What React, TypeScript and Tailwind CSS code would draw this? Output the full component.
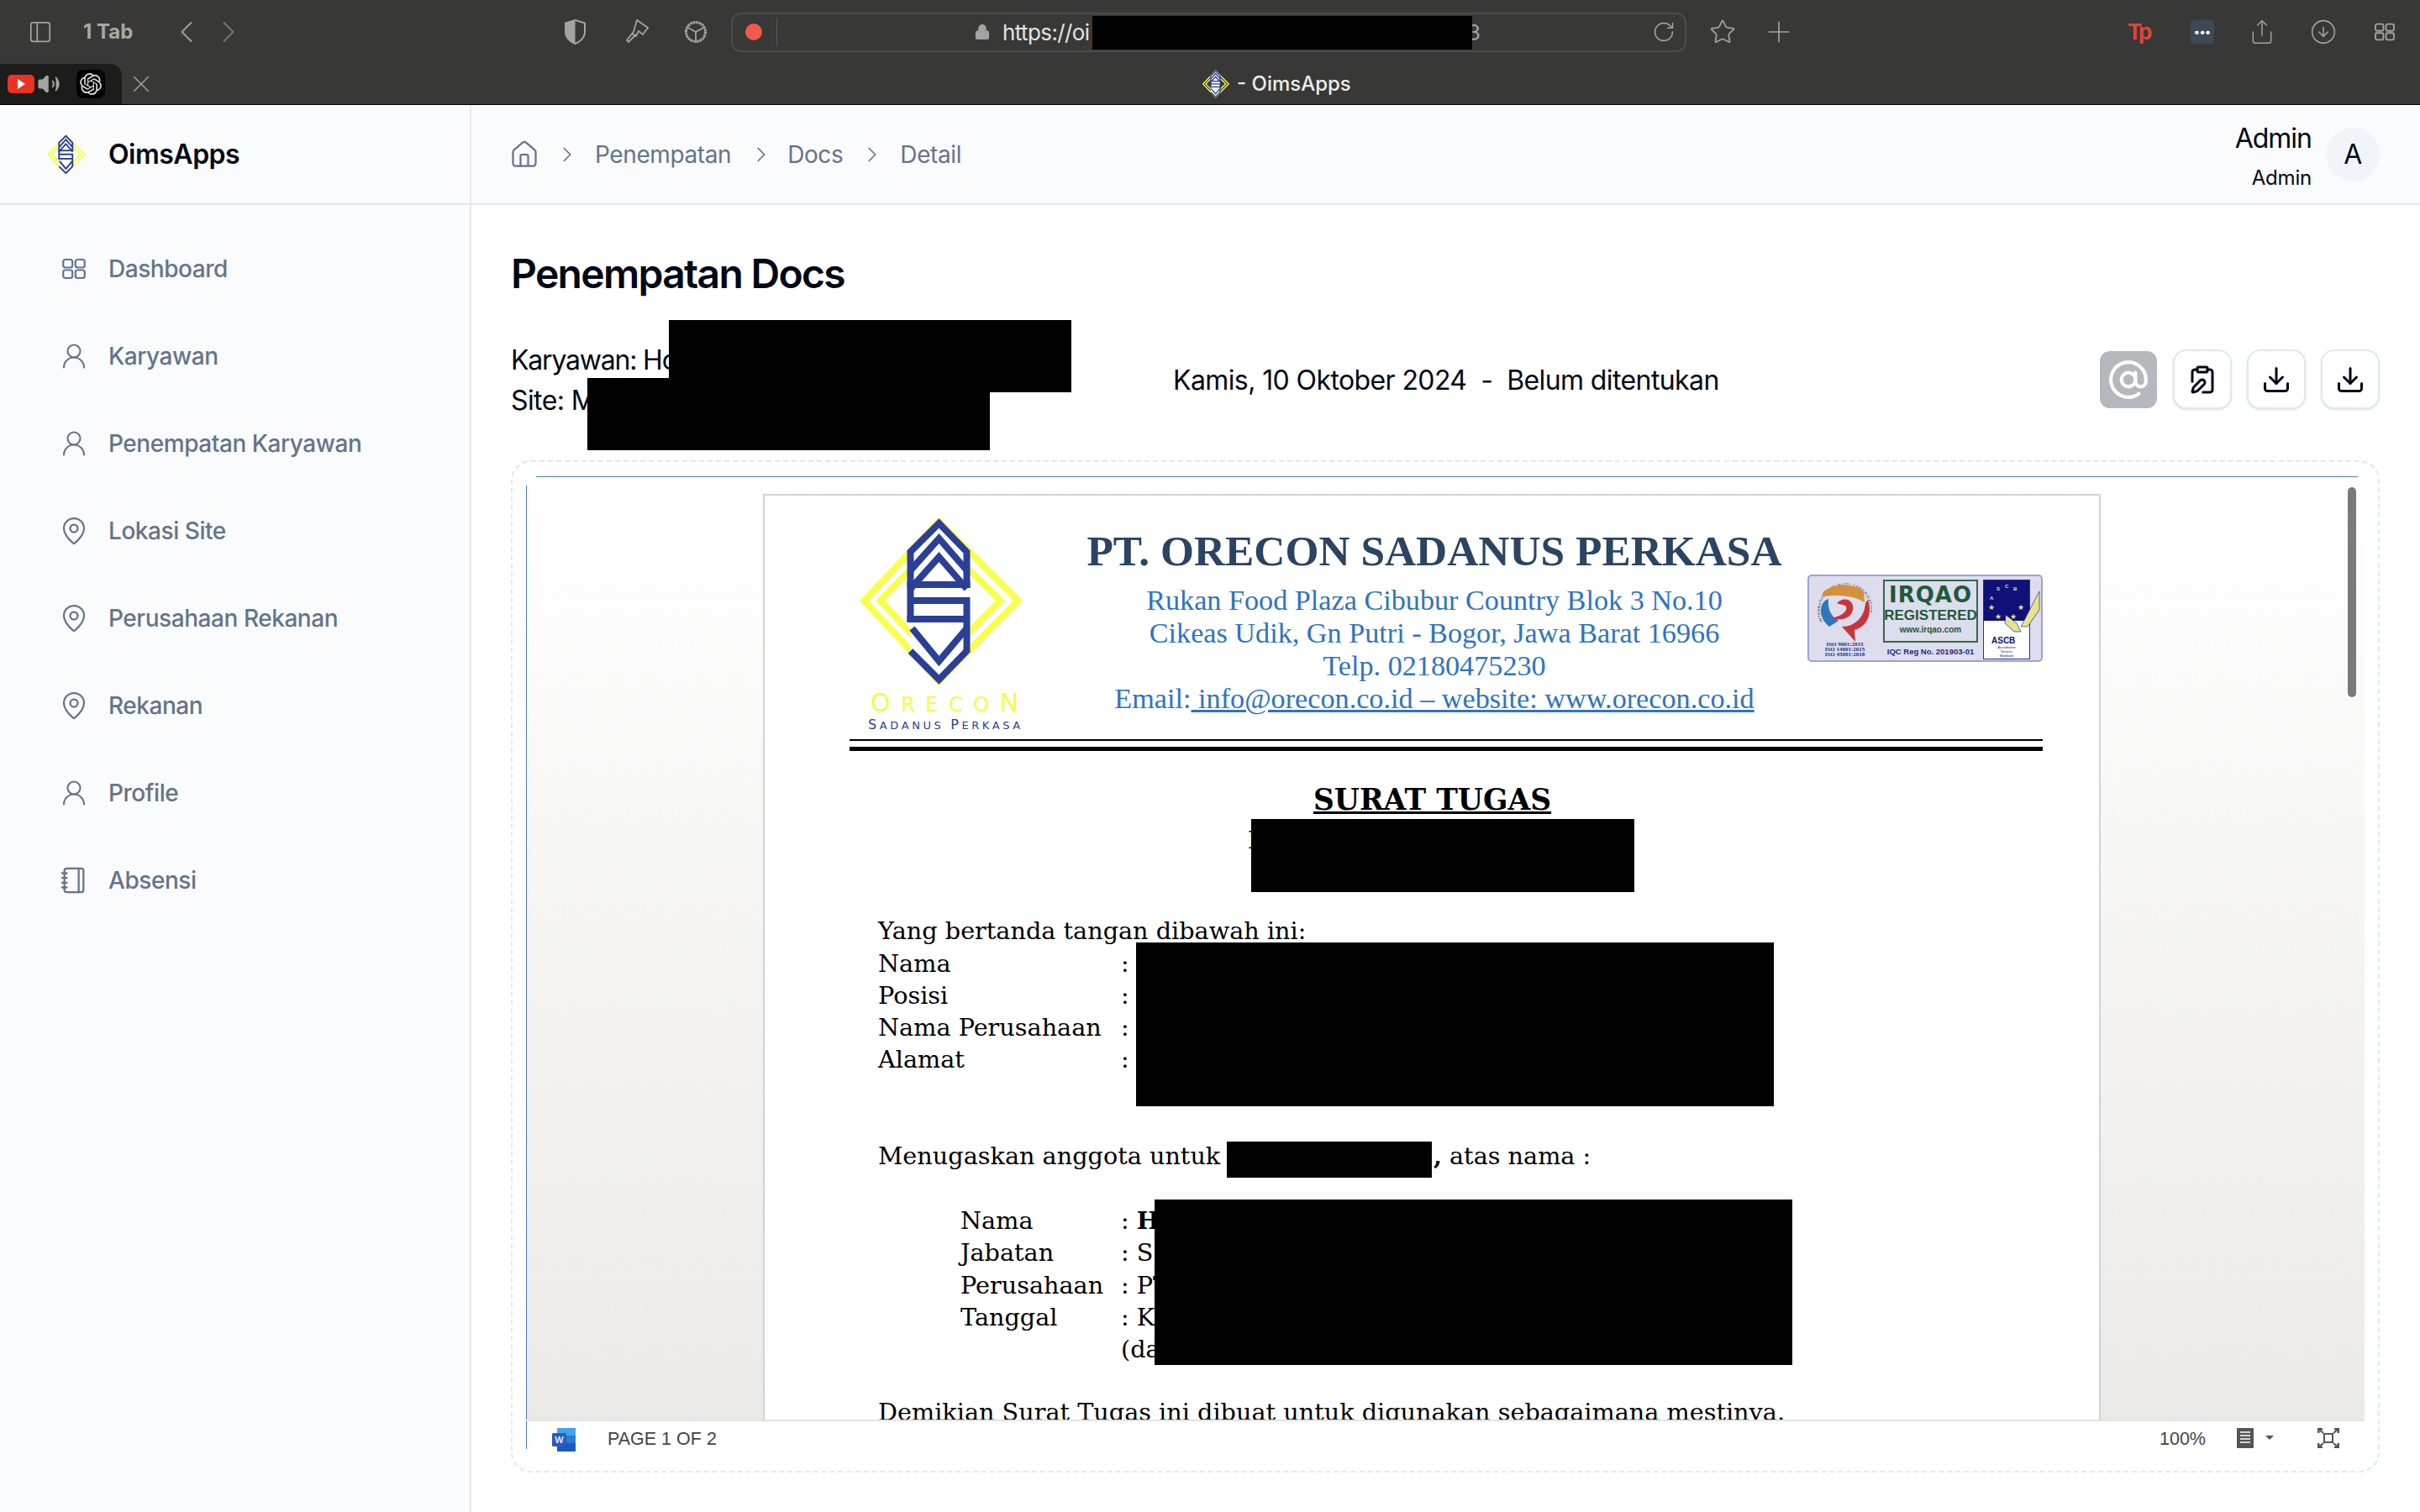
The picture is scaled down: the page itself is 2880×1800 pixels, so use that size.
import {
  ChevronLeft,
  ChevronRight,
  Download,
  House,
  Lock,
  MapPin,
  Notebook,
  PanelLeft,
  Plus,
  RotateCw,
  Share,
  Star,
  UserRound,
  Volume2,
  X,
  CircleArrowDown,
  AtSign,
  ClipboardPen,
} from "lucide-react";
import { SiOpenai } from "react-icons/si";

const GridIcon = ({ className }: { className?: string }) => (
  <svg viewBox="0 0 28 28" fill="none" stroke="currentColor" strokeWidth="2.2" className={className}>
    <rect x="1.2" y="3" width="11" height="9.5" rx="2.5" />
    <rect x="15.8" y="3" width="11" height="9.5" rx="2.5" />
    <rect x="1.2" y="15.5" width="11" height="9.5" rx="2.5" />
    <rect x="15.8" y="15.5" width="11" height="9.5" rx="2.5" />
  </svg>
);

const Logo = ({ className }: { className?: string }) => (
  <svg viewBox="0 0 193 198" fill="none" className={className}>
    <path d="M94 4 188 98 94 194 5 98Z" stroke="#f9ff4d" strokeWidth="8" />
    <path d="M94 26 167 98 94 172 24 98Z" stroke="#f9ff4d" strokeWidth="8" />
    <path d="M60 40 94 6 127 40V160L94 192 60 158V40Z" fill="#fff" />
    <g stroke="#2b3f96" strokeWidth="8" strokeLinejoin="miter">
      <path d="M60 123V40L94 6 127 40V83" />
      <path d="M60 62 94 24 127 62" />
      <path d="M60 84 94 46 127 84" />
      <path d="M56 79H131" />
      <path d="M60 98H127V160" />
      <path d="M56 120H127" />
      <path d="M62 131 94 170 127 131" />
      <path d="M60 158 94 192 127 158" />
    </g>
  </svg>
);

const Seal = () => (
  <svg viewBox="0 0 65 74" className="h-[74px] w-[65px]">
    <defs>
      <path id="seal-ring" d="M6 50A30 30 0 1 1 60 50" fill="none" />
    </defs>
    <text fontSize="4.4" fontFamily="'Liberation Sans', sans-serif" fill="#333" letterSpacing="0.6">
      <textPath href="#seal-ring">INTERNATIONAL QUALITY CERTIFICATION</textPath>
    </text>
    <path d="M6 16C14 6 40 2 55 14L56 27C42 18 22 18 6 20Z" fill="#d68f3c" />
    <path d="M13 23C2 26 0 45 14 56L25 49C15 43 12 34 13 23Z" fill="#2f77bd" />
    <path d="M60 24C66 42 58 56 44 60L45 74 29 56C45 56 56 44 57 28Z" fill="#c9343a" />
    <path d="M23 28C32 19 44 24 42 36 40 46 28 50 16 46 28 44 36 38 34 32 31 29 26 30 23 28Z" fill="#c9343a" />
  </svg>
);

const AscbMark = () => (
  <svg viewBox="0 0 70 95" className="h-[95px] w-[70px]" fontFamily="'Liberation Sans', sans-serif">
    <rect x="0.5" y="0.5" width="55" height="94" fill="#fff" stroke="#2d2f8f" />
    <rect x="1" y="1" width="54" height="48" fill="#10107a" />
    <g fill="#e8e89a" fontSize="6" fontWeight="700">
      <text x="8" y="24">A</text>
      <text x="16" y="13">S</text>
      <text x="26" y="10">C</text>
      <text x="36" y="13">B</text>
    </g>
    <g fill="#e8e89a" fontSize="9">
      <text x="6" y="36">★</text>
      <text x="14" y="47">★</text>
      <text x="32" y="47">★</text>
      <text x="41" y="36">★</text>
    </g>
    <path d="M27 42 40 52 45 62 37 62 26 52ZM45 56 67 14V36L53 56Z" fill="#e6e38a" stroke="#10107a" strokeWidth="0.6" />
    <text x="10" y="76" fontSize="10" fontWeight="700" fill="#10107a">ASCB</text>
    <g fontSize="3.6" fill="#10107a" textAnchor="middle">
      <text x="28" y="82">Accreditation</text>
      <text x="28" y="87">Services</text>
      <text x="28" y="92">Worldwide</text>
    </g>
  </svg>
);

const WordIcon = () => (
  <svg viewBox="0 0 28 28" className="h-[28px] w-[28px]">
    <rect x="6" y="0" width="22" height="9" fill="#41a5ee" />
    <rect x="6" y="9" width="22" height="9" fill="#2b7cd3" />
    <rect x="6" y="18" width="22" height="10" fill="#185abd" />
    <rect x="0" y="6" width="17" height="16" rx="1.5" fill="#2b5cb8" />
    <text x="8.5" y="18" fontSize="11" fontWeight="700" fill="#dfe8f8" textAnchor="middle" fontFamily="'Liberation Sans', sans-serif">W</text>
  </svg>
);

const menus = [
  { label: "Dashboard", icon: "grid" },
  { label: "Karyawan", icon: "user" },
  { label: "Penempatan Karyawan", icon: "user" },
  { label: "Lokasi Site", icon: "pin" },
  { label: "Perusahaan Rekanan", icon: "pin" },
  { label: "Rekanan", icon: "pin" },
  { label: "Profile", icon: "user" },
  { label: "Absensi", icon: "book" },
];

const MenuIcon = ({ name }: { name: string }) => {
  if (name === "grid") return <GridIcon className="h-[28px] w-[28px]" />;
  if (name === "user") return <UserRound className="h-[36px] w-[36px]" strokeWidth={1.4} />;
  if (name === "pin") return <MapPin className="h-[36px] w-[36px]" strokeWidth={1.5} />;
  return <Notebook className="h-[34px] w-[34px]" strokeWidth={1.6} />;
};

const rows1 = ["Nama", "Posisi", "Nama Perusahaan", "Alamat"];
const rows2 = [
  { label: "Nama", value: ": ", first: "H", bold: true },
  { label: "Jabatan", value: ": ", first: "S", bold: false },
  { label: "Perusahaan", value: ": ", first: "PT", bold: false },
  { label: "Tanggal", value: ": ", first: "K", bold: false },
  { label: "", value: "", first: "(da", bold: false },
];

const BrowserBar = () => (
  <div className="h-[125px] shrink-0 border-b border-black bg-[#383836] text-[#a3a3a1]">
    <div className="flex h-[76px] items-center pl-[33px]">
      <PanelLeft className="h-[30px] w-[30px]" strokeWidth={1.4} />
      <span className="ml-[36px] w-[61px] text-[24px] font-bold whitespace-nowrap text-[#a8a8a6]">1 Tab</span>
      <ChevronLeft className="ml-[40px] h-[44px] w-[44px]" strokeWidth={1} />
      <ChevronRight className="ml-[6px] h-[44px] w-[44px] text-[#777775]" strokeWidth={1} />
      <svg viewBox="0 0 25 30" className="ml-[378px] h-[30px] w-[25px]">
        <path d="M12.5 1 24 4.5V15C24 22 18 27 12.5 29 7 27 1 22 1 15V4.5Z" fill="none" stroke="#a3a3a1" strokeWidth="2" />
        <path d="M12.5 1 1 4.5V15C1 22 7 27 12.5 29Z" fill="#a3a3a1" />
      </svg>
      <svg viewBox="0 0 28 30" fill="none" stroke="#a3a3a1" strokeWidth="1.8" className="ml-[47px] h-[30px] w-[28px]">
        <path d="M14 1 27 10 21 18 16 14 13 20 9 18 Z" />
        <path d="M13 18 4 27 2 25 9 16" />
      </svg>
      <svg viewBox="0 0 28 28" fill="none" stroke="#a3a3a1" strokeWidth="1.8" className="ml-[42px] h-[28px] w-[28px]">
        <circle cx="14" cy="14" r="11.5" strokeDasharray="3 0.6" strokeWidth="3" />
        <path d="M14 14 5 9M14 14 23 9M14 14V25" />
      </svg>
      <div className="relative ml-[28px] flex h-[47px] w-[1137px] items-center rounded-[12px] border-2 border-[#4c4c4a]">
        <span className="ml-[15px] h-[20px] w-[20px] rounded-full bg-[#ef5a4a]" />
        <span className="ml-[17px] h-[33px] w-px bg-[#5c5c5a]" />
        <Lock className="ml-[234px] h-[24px] w-[20px]" fill="#a3a3a1" strokeWidth={1.5} />
        <span className="ml-[14px] w-[106px] text-[26px] tracking-[-0.6px] whitespace-nowrap text-[#e4e4e2]">https://oi</span>
        <span className="ml-[447px] text-[26px] text-[#a3a3a1]">3</span>
        <RotateCw className="ml-auto mr-[11px] h-[28px] w-[28px]" strokeWidth={1.3} />
      </div>
      <Star className="ml-[27px] h-[32px] w-[32px]" strokeWidth={1.3} />
      <Plus className="ml-[31px] h-[40px] w-[40px]" strokeWidth={1} />
      <span className="ml-[395px] w-[30px] text-[26px] leading-none font-bold tracking-[-3px] text-[#e0453a]">Tp</span>
      <span className="ml-[45px] flex h-[28px] w-[28px] items-center justify-center rounded-[3px] bg-[#3c4a58] text-[14px] leading-none font-bold text-white">•••</span>
      <Share className="ml-[41px] h-[38px] w-[32px]" strokeWidth={1.1} />
      <CircleArrowDown className="ml-[41px] h-[32px] w-[32px]" strokeWidth={1.2} />
      <GridIcon className="ml-[45px] h-[26px] w-[24px]" />
    </div>
    <div className="flex h-[48px] items-center">
      <div className="flex h-full w-[145px] items-center rounded-tr-[14px] bg-[#1c1c1b] pl-[9px]">
        <span className="flex h-[22px] w-[32px] items-center justify-center rounded-[5px] bg-[#ea3323]">
          <span className="h-0 w-0 border-y-[6px] border-l-[9px] border-y-transparent border-l-white" />
        </span>
        <Volume2 className="ml-[2px] h-[28px] w-[30px]" fill="#a3a3a1" strokeWidth={1.6} />
        <span className="ml-[18px] flex h-[34px] w-[34px] items-center justify-center rounded-[8px] bg-black text-[#d8d8d8]">
          <SiOpenai className="h-[26px] w-[26px]" />
        </span>
      </div>
      <X className="ml-[6px] h-[34px] w-[34px]" strokeWidth={1} />
      <Logo className="ml-[1246px] h-[34px] w-[32px]" />
      <span className="ml-[9px] text-[24px] font-medium whitespace-nowrap text-[#ececea]">- OimsApps</span>
    </div>
  </div>
);

const TopHeader = () => (
  <div className="flex h-[119px] shrink-0 border-b-2 border-[#e2e8f0] bg-[#fafbfd]">
    <div className="flex w-[561px] items-center border-r-2 border-[#e2e8f0] pl-[56px]">
      <Logo className="h-[60px] w-[46px]" />
      <span className="ml-[27px] text-[32px] font-semibold tracking-[-0.5px] text-[#020817]">OimsApps</span>
    </div>
    <div className="flex flex-1 items-center pl-[45px] pr-[48px] text-[28px] tracking-[-0.4px] text-[#64748b]">
      <House className="h-[36px] w-[36px]" strokeWidth={1.5} />
      <ChevronRight className="ml-[18px] h-[30px] w-[30px]" strokeWidth={1.4} />
      <span className="ml-[18px]">Penempatan</span>
      <ChevronRight className="ml-[21px] h-[30px] w-[30px]" strokeWidth={1.4} />
      <span className="ml-[16px]">Docs</span>
      <ChevronRight className="ml-[20px] h-[30px] w-[30px]" strokeWidth={1.4} />
      <span className="ml-[18px]">Detail</span>
      <div className="ml-auto flex flex-col items-end pt-[2px] text-[#020817]">
        <span className="text-[32px] leading-[40px] tracking-[-1px]">Admin</span>
        <span className="mt-[15px] text-[24px] leading-[24px] tracking-[-0.2px]">Admin</span>
      </div>
      <div className="ml-[17px] flex h-[64px] w-[64px] items-center justify-center rounded-full bg-[#f1f5f9] text-[32px] text-[#020817]">
        A
      </div>
    </div>
  </div>
);

const Sidebar = () => (
  <aside className="w-[561px] shrink-0 border-r-2 border-[#e2e8f0] bg-[#fafbfd] pl-[70px] pt-[24px]">
    {menus.map((m) => (
      <div key={m.label} className="flex h-[104px] items-center text-[#64748b]">
        <span className="flex w-[36px] justify-center">
          <MenuIcon name={m.icon} />
        </span>
        <span className="ml-[23px] text-[28px] font-medium tracking-[-0.45px]">{m.label}</span>
      </div>
    ))}
  </aside>
);

const DocHeader = () => (
  <div className="flex h-[263px]">
    <div className="ml-[11px] flex w-[208px] flex-col">
      <Logo className="h-[198px] w-[196px]" />
      <span className="mt-[7px] ml-[14px] flex items-baseline font-['DejaVu_Sans'] text-[24px] leading-[30px] tracking-[12.5px] whitespace-nowrap text-[#f5fb4a]">
        <span className="text-[30px]">O</span>RECO<span className="text-[30px]">N</span>
      </span>
      <span className="mt-[1px] ml-[11px] flex items-baseline font-['DejaVu_Sans'] text-[13px] leading-[16px] tracking-[3.6px] whitespace-nowrap text-[#2b3f96]">
        <span className="text-[16px]">S</span>ADANUS&nbsp;<span className="text-[16px]">P</span>ERKASA
      </span>
    </div>
    <div className="ml-[33px] flex w-[888px] flex-col items-center font-['Liberation_Serif'] text-[34.2px] leading-[39px] text-[#2e74c0]">
      <span className="mt-[9px] text-[51.4px] leading-[60px] font-bold whitespace-nowrap text-[#2b4463]">PT. ORECON SADANUS PERKASA</span>
      <span className="mt-[9px]">Rukan Food Plaza Cibubur Country Blok 3 No.10</span>
      <span>Cikeas Udik, Gn Putri - Bogor, Jawa Barat 16966</span>
      <span>Telp. 02180475230</span>
      <span>
        Email:<span className="underline"> info@orecon.co.id – website: www.orecon.co.id</span>
      </span>
    </div>
    <div className="mt-[67px] flex h-[104px] w-[280px] shrink-0 rounded-[5px] border-2 border-[#9aa5cf] bg-[#dddded] pl-[10px] pt-[4px] font-['Liberation_Sans']">
      <div className="flex w-[65px] flex-col items-center">
        <Seal />
        <span className="w-[70px] text-center font-['Liberation_Serif'] text-[7px] leading-[6px] font-bold text-[#1d2a80]">
          ISO 9001:2015
          <br />
          ISO 14001:2015
          <br />
          ISO 45001:2018
        </span>
      </div>
      <div className="ml-[13px] flex w-[113px] flex-col items-center">
        <div className="flex h-[75px] w-[113px] flex-col items-center border-2 border-[#2f6b47] text-[#1e5a3a]">
          <span className="font-['DejaVu_Sans'] text-[26px] leading-[32px] font-bold tracking-[1px]">IRQAO</span>
          <span className="text-[17px] leading-[18px] font-bold whitespace-nowrap">REGISTERED</span>
          <span className="mt-[2px] text-[10px] leading-[12px] font-bold">www.irqao.com</span>
        </div>
        <span className="mt-[6px] text-[9.5px] leading-[10px] font-bold whitespace-nowrap text-[#1d2a80]">IQC Reg No. 201903-01</span>
      </div>
      <div className="ml-[6px]">
        <AscbMark />
      </div>
    </div>
  </div>
);

const DocPage = () => (
  <div className="ml-[281px] mt-[10px] h-[1300px] w-[1592px] border-2 border-[#d2d3d6] bg-white pl-[101px] pt-[27px] font-['DejaVu_Serif'] text-[28.7px] leading-[38.3px] text-black">
    <DocHeader />
    <div className="h-[2px] w-[1420px] bg-black" />
    <div className="mt-[7px] h-[5px] w-[1420px] bg-black" />
    <div className="mr-[100px] mt-[38px] text-center text-[34.5px] leading-[40px] font-bold underline">SURAT TUGAS</div>
    <div className="ml-[474px] mt-[9px]">Nomor</div>
    <div className="ml-[34px] mt-[70px]">Yang bertanda tangan dibawah ini:</div>
    {rows1.map((r) => (
      <div key={r} className="ml-[34px] flex">
        <span className="w-[289px]">{r}</span>
        <span>:</span>
      </div>
    ))}
    <div className="ml-[34px] mt-[76px] flex whitespace-pre">
      <span className="w-[414px]">Menugaskan anggota untuk</span>
      <span className="w-[244px] text-right font-bold">a</span>
      <span className="ml-[3px] font-bold">,</span>
      <span className="ml-[9px]">atas nama :</span>
    </div>
    <div className="ml-[132px] mt-[39px]">
      {rows2.map((r) => (
        <div key={r.first} className="flex">
          <span className="w-[191px]">{r.label}</span>
          <span className="whitespace-pre">
            {r.value}
            <span className={r.bold ? "font-bold" : ""}>{r.first}</span>
          </span>
        </div>
      ))}
    </div>
    <div className="ml-[34px] mt-[36px] whitespace-nowrap">Demikian Surat Tugas ini dibuat untuk digunakan sebagaimana mestinya.</div>
  </div>
);

const DocViewer = () => (
  <div className="mt-[61px] flex h-[1205px] flex-col rounded-[24px] border-2 border-dashed border-[#e2e8f0] pb-[16px] pl-[16px] pr-[16px] pt-[17px]">
    <div className="ml-[12px] mr-[8px] h-px shrink-0 bg-[#4a7dc9]" />
    <div className="relative mt-[10px] flex-1 overflow-hidden border-l border-[#4a7dc9] bg-linear-to-b from-white to-[#ebeae8]">
      <DocPage />
      <div className="absolute right-[10px] top-[2px] h-[250px] w-[10px] rounded-full bg-[#7a7a7a]" />
    </div>
    <div className="relative flex h-[45px] shrink-0 items-start border-t-2 border-[#e3e3e3] bg-white pt-[8px] font-['Liberation_Sans'] text-[21.5px] leading-[26px] text-[#444]">
      <div className="absolute left-0 top-0 h-[33px] w-px bg-[#4a7dc9]" />
      <div className="ml-[31px]">
        <WordIcon />
      </div>
      <span className="ml-[38px]">PAGE 1 OF 2</span>
      <span className="ml-auto">100%</span>
      <svg viewBox="0 0 20 24" className="ml-[37px] h-[24px] w-[20px]">
        <rect width="20" height="24" rx="1" fill="#555" />
        <path d="M4 5H16M4 9H16M4 13H16M4 17H16" stroke="#fff" strokeWidth="1.6" />
      </svg>
      <span className="ml-[14px] mt-[9px] h-0 w-0 border-x-[5px] border-t-[5px] border-x-transparent border-t-[#555]" />
      <svg viewBox="0 0 26 24" fill="none" stroke="#555" strokeWidth="2" className="ml-[52px] mr-[30px] h-[24px] w-[26px]">
        <rect x="8" y="7" width="10" height="10" />
        <path d="M1 1 7 6M25 1 19 6M1 23 7 18M25 23 19 18" />
        <path d="M1 6V1H6M20 1H25V6M1 18V23H6M20 23H25V18" strokeWidth="3" />
      </svg>
    </div>
  </div>
);

const ActionButton = ({ children }: { children: React.ReactNode }) => (
  <button className="flex h-[71px] w-[70px] items-center justify-center rounded-[16px] border-2 border-[#e2e8f0] bg-white text-[#020817] shadow-sm">
    {children}
  </button>
);

const MainContent = () => (
  <main className="flex-1 bg-white pl-[47px] pr-[48px]">
    <h1 className="mt-[52px] text-[48px] leading-[60px] font-semibold tracking-[-1.7px] text-[#020817]">Penempatan Docs</h1>
    <div className="mt-[60px] flex h-[71px] items-center text-[32px] tracking-[-0.6px] text-[#020817]">
      <div className="mt-[2px] w-[788px] leading-[48px]">
        <p className="tracking-[-1.2px]">Karyawan: Ho</p>
        <p>Site: M</p>
      </div>
      <span className="mt-[2px] whitespace-pre">Kamis, 10 Oktober 2024  -  Belum ditentukan</span>
      <div className="ml-auto flex items-center gap-[18px]">
        <button className="mr-px flex h-[68px] w-[68px] items-center justify-center rounded-[12px] bg-[#b5b8bf] text-white">
          <AtSign className="h-[50px] w-[50px]" strokeWidth={2} />
        </button>
        <ActionButton>
          <ClipboardPen className="h-[36px] w-[36px]" strokeWidth={2} />
        </ActionButton>
        <ActionButton>
          <Download className="h-[36px] w-[36px]" strokeWidth={2} />
        </ActionButton>
        <ActionButton>
          <Download className="h-[36px] w-[36px]" strokeWidth={2} />
        </ActionButton>
      </div>
    </div>
    <DocViewer />
  </main>
);

export default function App() {
  return (
    <div className="relative flex h-[1800px] w-[2880px] flex-col overflow-hidden bg-white font-['Inter',sans-serif]">
      <BrowserBar />
      <TopHeader />
      <div className="flex flex-1">
        <Sidebar />
        <MainContent />
      </div>

      {/* redacted areas of the original capture */}
      <div className="absolute left-[1300px] top-[19px] h-[40px] w-[452px] bg-black" />
      <div className="absolute left-[796px] top-[381px] h-[86px] w-[479px] bg-black" />
      <div className="absolute left-[699px] top-[450px] h-[86px] w-[479px] bg-black" />
      <div className="absolute left-[1489px] top-[975px] h-[87px] w-[456px] bg-black" />
      <div className="absolute left-[1352px] top-[1122px] h-[195px] w-[759px] bg-black" />
      <div className="absolute left-[1460px] top-[1359px] h-[43px] w-[244px] bg-black" />
      <div className="absolute left-[1374px] top-[1428px] h-[197px] w-[759px] bg-black" />
    </div>
  );
}
